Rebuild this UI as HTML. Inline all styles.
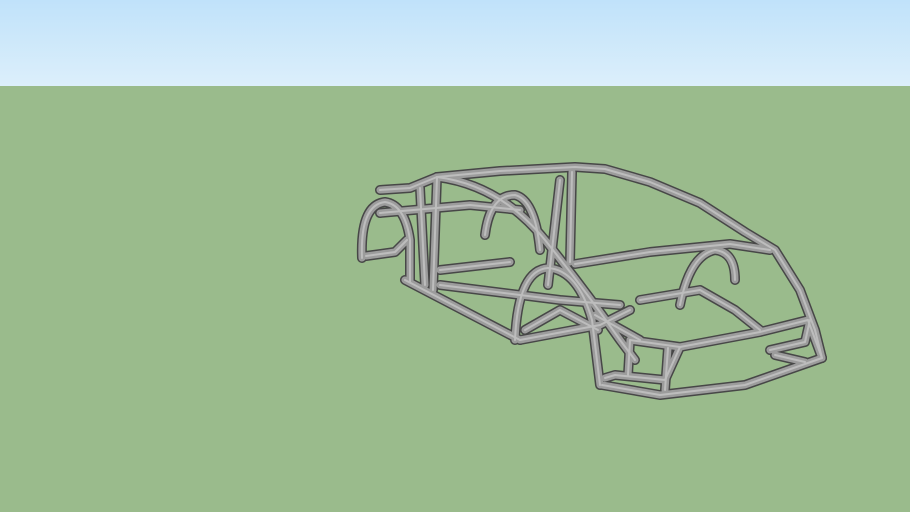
<!DOCTYPE html>
<html><head><style>
html,body{margin:0;padding:0;width:910px;height:512px;overflow:hidden;font-family:"Liberation Sans",sans-serif}
.sky{position:absolute;left:0;top:0;width:910px;height:86px;background:linear-gradient(#c0e2fa,#dceffb)}
.g{position:absolute;left:0;top:86px;width:910px;height:426px;background:#9abb8c}
svg{position:absolute;left:0;top:0}
</style></head><body>
<div class="sky"></div><div class="g"></div>
<svg width="910" height="512" viewBox="0 0 910 512">
<defs>
<g id="f" fill="none" stroke-linejoin="round" stroke-linecap="round">
<path d="M437 177 L500 171 L575 167 L605 169 L650 182 L700 203 L745 232 L775 250 L800 290 L815 330 L822 358"/>
<path d="M380 190 L410 188 L437 177"/>
<path d="M437 177 Q500 185 545 240 Q585 290 620 340 L635 360"/>
<path d="M420 188 L425 285"/><path d="M437 177 L433 290"/>
<path d="M572 172 L570 262"/><path d="M560 180 L548 285"/>
<path d="M575 264 L650 252 L730 244 L770 250"/>
<path d="M380 213 L470 205 L520 210"/>
<path d="M405 280 L520 340"/>
<path d="M440 285 L560 300 L620 305"/>
<path d="M440 270 L510 262"/>
<path d="M520 340 L600 325 L630 310"/>
<path d="M362 258 Q360 205 385 202 Q405 205 410 240 L410 282"/>
<path d="M366 256 L395 252 L407 240"/>
<path d="M485 235 Q490 195 515 195 Q535 200 540 250"/>
<path d="M515 340 Q518 270 548 268 Q578 270 592 320 L600 385"/>
<path d="M525 330 L560 310 L598 330"/>
<path d="M680 305 Q690 255 715 250 Q735 252 735 280"/>
<path d="M640 300 L700 290 L735 310 L760 330"/>
<path d="M630 340 L680 347 L760 332 L808 320 L822 358"/>
<path d="M602 385 L660 395 L745 385 L822 358"/>
<path d="M605 378 L615 375 L665 380 L680 347"/>
<path d="M665 390 L668 348"/>
<path d="M630 340 L628 375"/>
<path d="M770 350 L805 342 L810 320"/>
<path d="M775 355 L805 362"/>
<path d="M595 315 L640 340"/>
</g>
</defs>
<use href="#f" stroke="#474747" stroke-width="10"/>
<use href="#f" stroke="#9c9c9c" stroke-width="7"/>
<use href="#f" stroke="#bdbdbd" stroke-width="2"/>
</svg>
</body></html>
